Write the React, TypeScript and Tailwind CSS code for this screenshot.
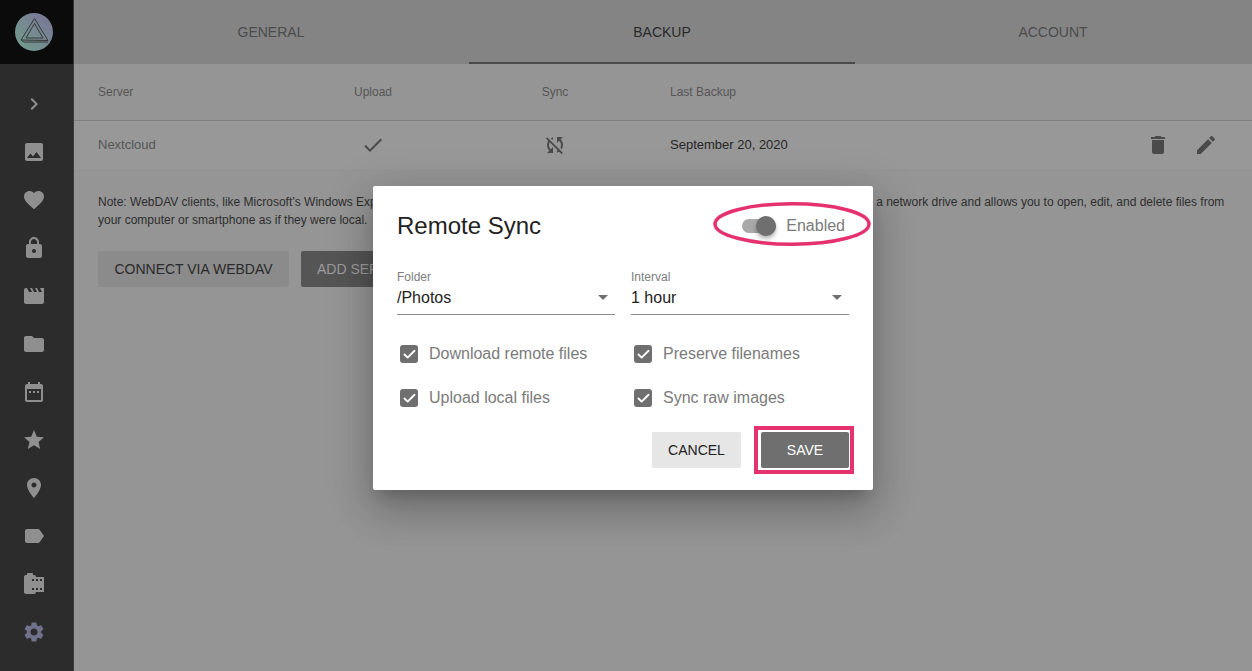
import { Check } from "lucide-react";
import type { ReactNode } from "react";

// Material icon paths, 24x24 viewBox
const ICONES_MENU = [
  "M21 19V5c0-1.1-.9-2-2-2H5c-1.1 0-2 .9-2 2v14c0 1.1.9 2 2 2h14c1.1 0 2-.9 2-2zM8.5 13.5l2.5 3.01L14.5 12l4.5 6H5l3.5-4.5z",
  "M12 21.35l-1.45-1.32C5.4 15.36 2 12.28 2 8.5 2 5.42 4.42 3 7.5 3c1.74 0 3.41.81 4.5 2.09C13.09 3.81 14.76 3 16.5 3 19.58 3 22 5.42 22 8.5c0 3.78-3.4 6.86-8.55 11.54L12 21.35z",
  "M18 8h-1V6c0-2.76-2.24-5-5-5S7 3.24 7 6v2H6c-1.1 0-2 .9-2 2v10c0 1.1.9 2 2 2h12c1.1 0 2-.9 2-2V10c0-1.1-.9-2-2-2zm-6 9c-1.1 0-2-.9-2-2s.9-2 2-2 2 .9 2 2-.9 2-2 2zm3.1-9H8.9V6c0-1.71 1.39-3.1 3.1-3.1 1.71 0 3.1 1.39 3.1 3.1v2z",
  "M18 4l2 4h-3l-2-4h-2l2 4h-3l-2-4H8l2 4H7L5 4H4c-1.1 0-1.99.9-1.99 2L2 18c0 1.1.9 2 2 2h16c1.1 0 2-.9 2-2V4h-4z",
  "M10 4H4c-1.1 0-1.99.9-1.99 2L2 18c0 1.1.9 2 2 2h16c1.1 0 2-.9 2-2V8c0-1.1-.9-2-2-2h-8l-2-2z",
  "M9 11H7v2h2v-2zm4 0h-2v2h2v-2zm4 0h-2v2h2v-2zm2-7h-1V2h-2v2H8V2H6v2H5c-1.11 0-1.99.9-1.99 2L3 20c0 1.1.89 2 2 2h14c1.1 0 2-.9 2-2V6c0-1.1-.9-2-2-2zm0 16H5V9h14v11z",
  "M12 17.27L18.18 21l-1.64-7.03L22 9.24l-7.19-.61L12 2 9.19 8.63 2 9.24l5.46 4.73L5.82 21z",
  "M12 2C8.13 2 5 5.13 5 9c0 5.25 7 13 7 13s7-7.75 7-13c0-3.87-3.13-7-7-7zm0 9.5c-1.38 0-2.5-1.12-2.5-2.5s1.12-2.5 2.5-2.5 2.5 1.12 2.5 2.5-1.12 2.5-2.5 2.5z",
  "M17.63 5.84C17.27 5.33 16.67 5 16 5L5 5.01C3.9 5.01 3 5.9 3 7v10c0 1.1.9 1.99 2 1.99L16 19c.67 0 1.27-.33 1.63-.84L22 12l-4.37-6.16z",
  "M14 5c0-1.1-.9-2-2-2h-1V2c0-.55-.45-1-1-1H6c-.55 0-1 .45-1 1v1H4c-1.1 0-2 .9-2 2v15c0 1.1.9 2 2 2h8c1.1 0 2-.9 2-2h8V5h-8zm-2 13h-2v-2h2v2zm0-9h-2V7h2v2zm4 9h-2v-2h2v2zm0-9h-2V7h2v2zm4 9h-2v-2h2v2zm0-9h-2V7h2v2z",
];

const PATH_ENGRENAGEM =
  "M19.14 12.94c.04-.3.06-.61.06-.94 0-.32-.02-.64-.07-.94l2.03-1.58c.18-.14.23-.41.12-.61l-1.92-3.32c-.12-.22-.37-.29-.59-.22l-2.39.96c-.5-.38-1.03-.7-1.62-.94l-.36-2.54c-.04-.24-.24-.41-.48-.41h-3.84c-.24 0-.43.17-.47.41l-.36 2.54c-.59.24-1.13.57-1.62.94l-2.39-.96c-.22-.08-.47 0-.59.22L2.74 8.87c-.12.21-.08.47.12.61l2.03 1.58c-.05.3-.09.63-.09.94s.02.64.07.94l-2.03 1.58c-.18.14-.23.41-.12.61l1.92 3.32c.12.22.37.29.59.22l2.39-.96c.5.38 1.03.7 1.62.94l.36 2.54c.05.24.24.41.48.41h3.84c.24 0 .44-.17.47-.41l.36-2.54c.59-.24 1.13-.56 1.62-.94l2.39.96c.22.08.47 0 .59-.22l1.92-3.32c.12-.22.07-.47-.12-.61l-2.01-1.58zM12 15.6c-1.98 0-3.6-1.62-3.6-3.6s1.62-3.6 3.6-3.6 3.6 1.62 3.6 3.6-1.62 3.6-3.6 3.6z";

const COLUNAS = "grid grid-cols-[259px_80px_102px_80px_75px_1fr] items-center";

function Icone({ d, className }: { d: string; className: string }) {
  return (
    <svg viewBox="0 0 24 24" className={className} fill="currentColor" aria-hidden>
      <path d={d} />
    </svg>
  );
}

function Marcado({ label }: { label: string }) {
  return (
    <div className="flex h-6 items-center gap-[11px] pl-[3px]">
      <span className="flex h-[18px] w-[18px] items-center justify-center rounded-[3px] bg-[#6f6f6f]">
        <Check className="h-[15px] w-[15px] text-white" strokeWidth={3} />
      </span>
      <span className="text-[16px] text-[#7b7b7b]">{label}</span>
    </div>
  );
}

function Selecao({ label, valor }: { label: string; valor: string }) {
  return (
    <div className="w-[218px]">
      <div className="text-[12px] leading-[14px] text-[#7d7d7d]">{label}</div>
      <div className="flex h-[31px] items-center justify-between border-b border-[#8a8a8a] pb-[3px] text-[16px] text-[#222]">
        <span>{valor}</span>
        <span className="mr-[7px] h-0 w-0 border-x-[5px] border-t-[5px] border-x-transparent border-t-[#707070]" />
      </div>
    </div>
  );
}

function Tab({ children, ativo }: { children: ReactNode; ativo?: boolean }) {
  return (
    <div
      className={`mx-[2.5px] flex h-full flex-1 items-center justify-center text-[14px] ${
        ativo ? "border-b-2 border-[#4a4a4a] pt-0.5 text-[#2a2a2a]" : "text-[#4c4c4c]"
      }`}
    >
      {children}
    </div>
  );
}

function Conteudo() {
  return (
    <div className="flex h-[671px] w-[1252px] overflow-hidden bg-[#959595]">
      {/* menu lateral */}
      <aside className="flex w-[74px] shrink-0 flex-col border-r border-[#3a3a3a] bg-[#2c2c2c]">
        <div className="flex h-16 w-full items-center bg-[#0b0b0b] pl-[15px]">
          <svg viewBox="0 0 38 38" className="h-[38px] w-[38px]" aria-hidden>
            <defs>
              <linearGradient id="logo" x1="0" y1="1" x2="1" y2="0">
                <stop offset="0" stopColor="#6f9f8a" />
                <stop offset="1" stopColor="#7b7398" />
              </linearGradient>
            </defs>
            <circle cx="19" cy="19" r="19" fill="url(#logo)" />
            <path
              d="M19.5 5.500L33 27.500 6 27zM19.500 10.500L28 25H11zM6 27L9 29H33"
              fill="none"
              stroke="#383838"
              strokeWidth="1"
            />
          </svg>
        </div>
        <div className="flex flex-col pl-[10px] pt-4">
          <div className="flex h-12 w-12 items-center justify-center text-[#8f8f8f]">
            <Icone d="M10 6L8.59 7.41 13.17 12l-4.58 4.59L10 18l6-6z" className="h-6 w-6" />
          </div>
          {ICONES_MENU.map((d, i) => (
            <div key={i} className="flex h-12 w-12 items-center justify-center text-[#8f8f8f]">
              <Icone d={d} className="h-6 w-6" />
            </div>
          ))}
          <div className="flex h-12 w-12 items-center justify-center text-[#70718a]">
            <Icone d={PATH_ENGRENAGEM} className="h-6 w-6" />
          </div>
        </div>
      </aside>

      <main className="flex min-w-0 flex-1 flex-col">
        <div className="flex h-16 shrink-0 bg-[#848484] pl-[1.5px] pr-[3.5px]">
          <Tab>GENERAL</Tab>
          <Tab ativo>BACKUP</Tab>
          <Tab>ACCOUNT</Tab>
        </div>

        <div className={`${COLUNAS} h-[57px] shrink-0 border-b border-[#808080] text-[12px] text-[#565656]`}>
          <div className="pl-6">Server</div>
          <div className="text-center">Upload</div>
          <div />
          <div className="text-center">Sync</div>
          <div />
          <div>Last Backup</div>
        </div>
        <div className={`${COLUNAS} h-[48px] shrink-0 bg-[#989898] text-[13px] text-[#565656]`}>
          <div className="pl-6">Nextcloud</div>
          <div className="flex justify-center text-[#4a4a4a]">
            <Icone d="M9 16.17L4.83 12l-1.42 1.41L9 19 21 7l-1.41-1.41z" className="h-6 w-6" />
          </div>
          <div />
          <div className="flex justify-center text-[#4a4a4a]">
            <Icone
              d="M10 6.35V4.26c-.8.21-1.55.54-2.23.96l1.46 1.46c.25-.12.5-.24.77-.33zm-7.14-.94l2.36 2.36C4.45 8.99 4 10.44 4 12c0 2.21.91 4.2 2.36 5.64L4 20h6v-6l-2.24 2.24C6.68 15.15 6 13.66 6 12c0-1 .25-1.94.68-2.77l8.08 8.08c-.25.13-.5.25-.77.34v2.09c.8-.21 1.55-.54 2.23-.96l2.36 2.36 1.27-1.27L4.14 4.14 2.86 5.41zM20 4h-6v6l2.24-2.24C17.32 8.85 18 10.34 18 12c0 1-.25 1.94-.68 2.77l1.46 1.46C19.55 15.01 20 13.56 20 12c0-2.21-.91-4.2-2.36-5.64L20 4z"
              className="h-6 w-6"
            />
          </div>
          <div />
          <div className="flex items-center justify-between pr-[34px]">
            <span className="text-[#262626]">September 20, 2020</span>
            <div className="flex items-center gap-6 text-[#4a4a4a]">
              <Icone d="M6 19c0 1.1.9 2 2 2h8c1.1 0 2-.9 2-2V7H6v12zM19 4h-3.5l-1-1h-5l-1 1H5v2h14V4z" className="h-6 w-6" />
              <Icone d="M3 17.25V21h3.75L17.81 9.94l-3.75-3.75L3 17.25zM20.71 7.04c.39-.39.39-1.02 0-1.41l-2.34-2.34c-.39-.39-1.02-.39-1.41 0l-1.83 1.83 3.75 3.75 1.83-1.83z" className="h-6 w-6" />
            </div>
          </div>
        </div>

        <div className="px-6 pt-[24px] text-[12px] leading-[18px] text-[#2e2e2e]">
          Note: WebDAV clients, like Microsoft’s Windows Explorer or Apple’s Finder, provide a convenient way to access your photos. It is just displayed as a network drive and allows you to open, edit, and delete files from your computer or smartphone as if they were local.
        </div>
        <div className="flex gap-3 px-6 pt-[22px] text-[14px]">
          <div className="flex h-9 w-[191px] items-center justify-center rounded-[2px] bg-[#8b8b8b] text-[#2a2a2a]">CONNECT VIA WEBDAV</div>
          <div className="flex h-9 items-center rounded-[2px] bg-[#555] px-4 text-[#9b9b9b]">ADD SERVER</div>
        </div>
      </main>
    </div>
  );
}

export default function App() {
  return (
    <div className="relative h-[671px] w-[1252px] overflow-hidden font-['Liberation_Sans',Arial,sans-serif]">
      <Conteudo />

      {/* dialogo por cima do overlay */}
      <div className="absolute inset-0 flex items-start justify-center pr-[6px] pt-[186px]">
        <div className="h-[304px] w-[500px] rounded-[2px] bg-white px-6 shadow-[0_11px_15px_-7px_rgba(0,0,0,0.2),0_24px_38px_3px_rgba(0,0,0,0.14),0_9px_46px_8px_rgba(0,0,0,0.12)]">
          <div className="relative flex h-[84px] items-center justify-between pb-[4px]">
            <div className="text-[24px] text-[#222]">Remote Sync</div>
            <div className="flex items-center gap-[10px] pr-[4px]">
              <div className="relative h-[14px] w-[34px] rounded-full bg-[#a9a9a9]">
                <span className="absolute -top-[3px] right-0 h-5 w-5 rounded-full bg-[#6f6f6f] shadow-[0_2px_4px_-1px_rgba(0,0,0,0.3),0_4px_5px_rgba(0,0,0,0.14)]" />
              </div>
              <span className="text-[16px] text-[#7b7b7b]">Enabled</span>
            </div>
            {/* destaque rosa em volta do switch */}
            <svg viewBox="0 0 158 44" className="absolute -right-[22px] top-4 h-[44px] w-[158px]" fill="none" aria-hidden>
              <ellipse cx="79" cy="22" rx="77" ry="20.2" stroke="#e5326f" strokeWidth="3.5" />
            </svg>
          </div>

          <div className="flex gap-4">
            <Selecao label="Folder" valor="/Photos" />
            <Selecao label="Interval" valor="1 hour" />
          </div>

          <div className="mt-[27px] grid grid-cols-[234px_1fr] gap-y-5">
            <Marcado label="Download remote files" />
            <Marcado label="Preserve filenames" />
            <Marcado label="Upload local files" />
            <Marcado label="Sync raw images" />
          </div>

          <div className="relative mt-[22px] flex justify-end gap-5 text-[14px]">
            <div className="flex h-9 w-[89px] items-center justify-center rounded-[2px] bg-[#e6e6e6] text-[#222]">CANCEL</div>
            <div className="flex h-9 w-[88px] items-center justify-center rounded-[2px] bg-[#6f6f6f] text-white">SAVE</div>
            {/* destaque rosa em volta do salvar */}
            <div className="absolute -right-[5px] -top-[6px] h-12 w-[100px] border-[4px] border-[#e5326f]" />
          </div>
        </div>
      </div>
    </div>
  );
}
